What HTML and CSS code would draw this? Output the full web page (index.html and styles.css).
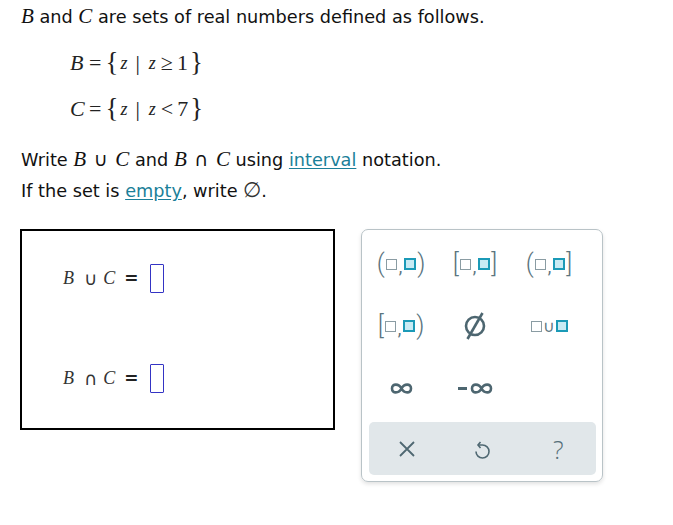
FILE: index.html
```html
<!DOCTYPE html>
<html>
<head>
<meta charset="utf-8">
<link rel="stylesheet" href="styles.css">
</head>
<body>
<div class="page">
  <p class="line first"><i class="mv">B</i> and <i class="mv">C</i> are sets of real numbers defined as follows.</p>
  <div class="math m1"><i class="v1">B</i><span class="op">=</span><span class="br">{</span><i class="z">z</i><span class="bar">|</span><i class="z">z</i><span class="op">≥</span><span class="n">1</span><span class="br">}</span></div>
  <div class="math m2"><i class="v1">C</i><span class="op">=</span><span class="br">{</span><i class="z">z</i><span class="bar">|</span><i class="z">z</i><span class="op">&lt;</span><span class="n">7</span><span class="br">}</span></div>
  <p class="line write">Write <i class="mv">B</i> <span class="setop">∪</span> <i class="mv">C</i> and <i class="mv">B</i> <span class="setop">∩</span> <i class="mv">C</i> using <a class="lnk">interval</a> notation.</p>
  <p class="line ifset">If the set is <a class="lnk">empty</a>, write <span class="empty">∅</span>.</p>

  <div class="work">
    <div class="answer">
      <div class="eq eq1"><i class="v">B</i><span class="so">∪</span><i class="v">C</i><span class="eqs">=</span><span class="slot"></span></div>
      <div class="eq eq2"><i class="v">B</i><span class="so">∩</span><i class="v">C</i><span class="eqs">=</span><span class="slot"></span></div>
    </div>
    <div class="keypad">
      <div class="keys">
        <div class="key"><span class="pr">(</span><span class="sq"></span><span class="cm">,</span><span class="sq f"></span><span class="pr">)</span></div>
        <div class="key"><span class="pr">[</span><span class="sq"></span><span class="cm">,</span><span class="sq f"></span><span class="pr">]</span></div>
        <div class="key"><span class="pr">(</span><span class="sq"></span><span class="cm">,</span><span class="sq f"></span><span class="pr">]</span></div>
        <div class="key"><span class="pr">[</span><span class="sq"></span><span class="cm">,</span><span class="sq f"></span><span class="pr">)</span></div>
        <div class="key"><svg width="26" height="30" viewBox="0 0 26 30"><circle cx="13" cy="15" r="9" fill="none" stroke="#4d6670" stroke-width="2.6"/><line x1="20.5" y1="2" x2="5.5" y2="28" stroke="#4d6670" stroke-width="2.6"/></svg></div>
        <div class="key"><span class="sq s2"></span><span class="cup">∪</span><span class="sq f s2"></span></div>
        <div class="key"><svg class="infs" width="23" height="15" viewBox="0 0 23 15"><path d="M11.5 7.5C9 2.4 2 2.2 2 7.5C2 12.8 9 12.6 11.5 7.5C14 2.4 21 2.2 21 7.5C21 12.8 14 12.6 11.5 7.5Z" fill="none" stroke="#4d6670" stroke-width="2.6"/></svg></div>
        <div class="key"><span class="minus"></span><svg class="infs" width="23" height="15" viewBox="0 0 23 15"><path d="M11.5 7.5C9 2.4 2 2.2 2 7.5C2 12.8 9 12.6 11.5 7.5C14 2.4 21 2.2 21 7.5C21 12.8 14 12.6 11.5 7.5Z" fill="none" stroke="#4d6670" stroke-width="2.6"/></svg></div>
        <div class="key"></div>
      </div>
      <div class="tools">
        <div class="tool"><svg width="18" height="18" viewBox="0 0 18 18"><path d="M2 2L16 16M16 2L2 16" stroke="#4f6872" stroke-width="1.8" fill="none"/></svg></div>
        <div class="tool"><svg width="18" height="22" viewBox="0 0 18 22"><path d="M5.5 7H9.5A6.5 6.5 0 1 1 3 13.5" stroke="#4f6872" stroke-width="1.6" fill="none"/><path d="M7.5 4L5 7L7.5 10" stroke="#4f6872" stroke-width="1.6" fill="none"/></svg></div>
        <div class="tool q">?</div>
      </div>
    </div>
  </div>
</div>
</body>
</html>
```
FILE: styles.css
```css
html, body { margin: 0; padding: 0; background: #fff; }
.page {
  width: 673px;
  height: 525px;
  padding: 0 0 0 21px;
  box-sizing: border-box;
  font-family: "DejaVu Sans", Verdana, sans-serif;
  font-size: 17.7px;
  color: #111;
}
.line { margin: 0; line-height: 22px; }
.first { padding-top: 5px; }
.mv { font-family: "Liberation Serif", "Times New Roman", serif; font-size: 21px; }
.math {
  font-family: "Liberation Serif", "Times New Roman", serif;
  font-size: 22px;
  line-height: 28px;
  margin-left: 49px;
  color: #222;
  display: flex;
  align-items: center;
  height: 28px;
}
.m1 { margin-top: 21px; }
.m2 { margin-top: 18px; }
.math .v1 { width: 15px; }
.math .op { margin: 0 4px 0 4px; }
.math .br { font-size: 27px; position: relative; top: -1px; }
.math .bar { margin: 0 7px 0 7px; }
.math .z { font-size: 18px; margin: 0 1px 0 2px; }
.math .n { margin-right: 2px; }
.write { margin-top: 25px; }
.ifset { margin-top: 8px; }
.setop { font-family: "DejaVu Sans", sans-serif; margin: 0 2px; font-size: 19px; }
.lnk { color: #1b7f99; text-decoration: underline; text-underline-offset: 2px; }
.empty { font-family: "Liberation Serif", serif; font-size: 21px; color: #333; }

.work { display: flex; gap: 26px; margin-top: 27px; margin-left: -1px; }
.answer {
  width: 315px;
  height: 201px;
  box-sizing: border-box;
  border: 2px solid #000;
  padding: 32px 0 0 41px;
}
.eq { display: flex; align-items: center; height: 30px; font-size: 15px; color: #222; }
.eq2 { margin-top: 70px; }
.eq .v { font-family: "Liberation Serif", serif; font-size: 18px; color: #333; }
.eq .so { margin: 0 6px 0 10px; font-size: 18px; color: #333; }
.eq .eqs { font-weight: bold; margin: 0 12px 0 9px; font-size: 17px; }
.slot { width: 14px; height: 29px; box-sizing: border-box; border: 1.5px solid #3434c4; border-radius: 1px; }

.keypad {
  width: 242px;
  height: 253px;
  box-sizing: border-box;
  border: 1px solid #b9c3c7;
  border-radius: 7px;
  box-shadow: 0 2px 4px rgba(0,0,0,0.12);
  padding: 3px 6px 6px 2px;
  display: flex;
  flex-direction: column;
}
.keys {
  display: grid;
  grid-template-columns: 74px 74px 74px;
  grid-template-rows: 62px 62px 62px;
}
.key {
  display: flex;
  align-items: center;
  justify-content: center;
  font-family: Roboto, "Open Sans", sans-serif;
  color: #5b7580;
}
.pr { font-size: 25px; font-weight: 300; line-height: 1; position: relative; top: -1px; }
.sq { width: 11px; height: 11px; box-sizing: border-box; border: 1.5px solid #8a9ca3; margin: 0 1px; }
.sq.f { width: 12px; height: 12px; border: 2px solid #1b9ab7; background: #c8ebf4; }
.cm { font-size: 18px; margin: 0 1px; position: relative; top: 2px; }
.s2 { margin: 0; }
.cup { font-size: 16px; margin: 0 1px; }
.infs { display: block; }
.minus { width: 9px; height: 3px; background: #4d6670; margin-right: 3px; }
.tools {
  margin-top: 3px;
  margin-left: 5px;
  height: 54px;
  background: #e1e7ea;
  border-radius: 5px;
  display: grid;
  grid-template-columns: 1fr 1fr 1fr;
}
.tool { display: flex; align-items: center; justify-content: center; }
.q { font-family: "Open Sans", Roboto, sans-serif; font-size: 25px; font-weight: 300; color: #56707a; }
```
